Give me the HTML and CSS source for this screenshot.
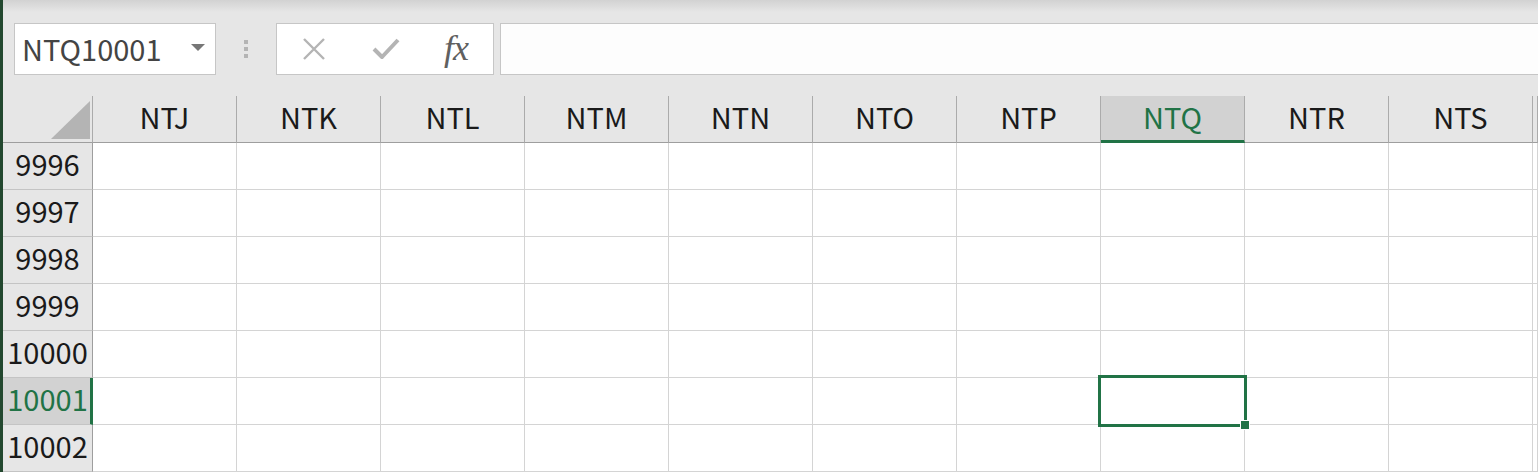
FILE: index.html
```html
<!DOCTYPE html>
<html lang="ja">
<head>
    <meta charset="UTF-8">
    <title>Sheet1</title>
    <link rel="stylesheet" href="styles.css">
</head>
<body>
<div class="app">
    <div class="edge"></div>
    <div class="main">
        <!-- 名前ボックスと数式バー -->
        <div class="toolbar">
            <div class="namebox">
                <span class="namebox-text">NTQ10001</span>
                <span class="namebox-arrow"></span>
            </div>
            <div class="grip"><i></i><i></i><i></i></div>
            <div class="fxbox">
                <svg class="btn-icon" width="24" height="22" viewBox="0 0 24 22">
                    <path d="M2 1 L22 21 M22 1 L2 21" stroke="#b4b4b4" stroke-width="2.4" fill="none"/>
                </svg>
                <svg class="btn-icon" width="28" height="22" viewBox="0 0 28 22">
                    <path d="M2 11 L10 19 L26 2" stroke="#b4b4b4" stroke-width="4" fill="none" stroke-linejoin="round"/>
                </svg>
                <span class="fx">fx</span>
            </div>
            <div class="formula"></div>
        </div>

        <!-- シート -->
        <div class="sheet">
            <div class="corner"><span class="corner-mark"></span></div>
            <div class="colhead">NTJ</div>
            <div class="colhead">NTK</div>
            <div class="colhead">NTL</div>
            <div class="colhead">NTM</div>
            <div class="colhead">NTN</div>
            <div class="colhead">NTO</div>
            <div class="colhead">NTP</div>
            <div class="colhead active">NTQ</div>
            <div class="colhead">NTR</div>
            <div class="colhead">NTS</div>
            <div class="colhead"></div>

            <div class="rowhead">9996</div>
            <div class="cell"></div><div class="cell"></div><div class="cell"></div><div class="cell"></div><div class="cell"></div><div class="cell"></div><div class="cell"></div><div class="cell"></div><div class="cell"></div><div class="cell"></div><div class="cell"></div>

            <div class="rowhead">9997</div>
            <div class="cell"></div><div class="cell"></div><div class="cell"></div><div class="cell"></div><div class="cell"></div><div class="cell"></div><div class="cell"></div><div class="cell"></div><div class="cell"></div><div class="cell"></div><div class="cell"></div>

            <div class="rowhead">9998</div>
            <div class="cell"></div><div class="cell"></div><div class="cell"></div><div class="cell"></div><div class="cell"></div><div class="cell"></div><div class="cell"></div><div class="cell"></div><div class="cell"></div><div class="cell"></div><div class="cell"></div>

            <div class="rowhead">9999</div>
            <div class="cell"></div><div class="cell"></div><div class="cell"></div><div class="cell"></div><div class="cell"></div><div class="cell"></div><div class="cell"></div><div class="cell"></div><div class="cell"></div><div class="cell"></div><div class="cell"></div>

            <div class="rowhead">10000</div>
            <div class="cell"></div><div class="cell"></div><div class="cell"></div><div class="cell"></div><div class="cell"></div><div class="cell"></div><div class="cell"></div><div class="cell"></div><div class="cell"></div><div class="cell"></div><div class="cell"></div>

            <div class="rowhead active">10001</div>
            <div class="cell"></div><div class="cell"></div><div class="cell"></div><div class="cell"></div><div class="cell"></div><div class="cell"></div><div class="cell"></div>
            <div class="cell selected"><div class="cursor"><span class="handle"></span></div></div>
            <div class="cell"></div><div class="cell"></div><div class="cell"></div>

            <div class="rowhead">10002</div>
            <div class="cell"></div><div class="cell"></div><div class="cell"></div><div class="cell"></div><div class="cell"></div><div class="cell"></div><div class="cell"></div><div class="cell"></div><div class="cell"></div><div class="cell"></div><div class="cell"></div>
        </div>
    </div>
</div>
</body>
</html>
```

FILE: styles.css
```css
/* 全体 */
html, body {
    margin: 0;
    padding: 0;
    background: #e6e6e6;
    overflow: hidden;
}
.app {
    display: flex;
    height: 472px;
    font-family: "Noto Sans CJK JP", "Noto Sans", sans-serif;
}
/* ウィンドウ左端 */
.edge {
    width: 3px;
    flex: none;
    background: #23482f;
}
.main {
    flex: 1;
    min-width: 0;
}

/* 数式バー */
.toolbar {
    display: flex;
    height: 52px;
    padding: 23px 0 21px 11px;
    background: linear-gradient(#d2d2d2, #e6e6e6 12px);
}
.namebox {
    width: 202px;
    box-sizing: border-box;
    border: 1px solid #c6c6c6;
    background: #fff;
    display: flex;
    align-items: center;
    padding: 0 10px 0 7px;
}
.namebox-text {
    flex: 1;
    font-size: 29px;
    color: #444;
    line-height: 1;
    margin-bottom: 2px;
}
.namebox-arrow {
    width: 0;
    height: 0;
    border-left: 7px solid transparent;
    border-right: 7px solid transparent;
    border-top: 7px solid #777;
    margin-bottom: 4px;
}
.grip {
    width: 60px;
    display: flex;
    flex-direction: column;
    align-items: center;
    justify-content: center;
    gap: 3px;
}
.grip i {
    display: block;
    width: 4px;
    height: 4px;
    background: #b4b4b4;
}
.fxbox {
    width: 218px;
    box-sizing: border-box;
    border: 1px solid #c6c6c6;
    background: #fff;
    display: flex;
    align-items: center;
    padding-left: 25px;
}
.btn-icon {
    margin-right: 46px;
}
.btn-icon + .btn-icon {
    margin-right: 44px;
}
.fx {
    font-family: "Liberation Serif", serif;
    font-style: italic;
    font-size: 36px;
    color: #606060;
    line-height: 1;
    margin-bottom: 2px;
    letter-spacing: -1px;
}
.formula {
    flex: 1;
    margin-left: 6px;
    margin-right: -2px;
    border: 1px solid #c6c6c6;
    background: #fdfdfd;
}

/* シート */
.sheet {
    display: grid;
    grid-template-columns: 90px repeat(10, 144px) 1fr;
    grid-auto-rows: 47px;
    background: #fff;
    font-size: 29px;
    color: #1a1a1a;
}
.corner, .colhead, .rowhead {
    background: #e6e6e6;
    box-sizing: border-box;
    display: flex;
    align-items: center;
    justify-content: center;
    line-height: 1;
}
.corner {
    border-right: 1px solid #ababab;
    border-bottom: 1px solid #9e9e9e;
    position: relative;
}
.corner-mark {
    position: absolute;
    right: 2px;
    bottom: 3px;
    width: 0;
    height: 0;
    border-left: 39px solid transparent;
    border-bottom: 38px solid #b4b4b4;
}
.colhead {
    border-right: 1px solid #ababab;
    border-bottom: 1px solid #9e9e9e;
    padding-bottom: 6px;
}
.rowhead {
    border-right: 1px solid #9e9e9e;
    border-bottom: 1px solid #c4c4c4;
    padding-bottom: 5px;
}
.colhead.active {
    background: #d2d2d2;
    color: #217346;
    border-bottom: 3px solid #217346;
    padding-bottom: 4px;
}
.rowhead.active {
    background: #d2d2d2;
    color: #217346;
    border-right: 3px solid #217346;
    padding-left: 2px;
}
.cell {
    box-sizing: border-box;
    border-right: 1px solid #d4d4d4;
    border-bottom: 1px solid #d4d4d4;
}

/* アクティブセル */
.cell.selected {
    position: relative;
}
.cursor {
    position: absolute;
    top: -3px;
    left: -3px;
    right: -3px;
    bottom: -3px;
    border: 3px solid #217346;
}
.handle {
    position: absolute;
    right: -6px;
    bottom: -6px;
    width: 10px;
    height: 10px;
    box-sizing: border-box;
    border: 1px solid #fff;
    background: #217346;
}
```
